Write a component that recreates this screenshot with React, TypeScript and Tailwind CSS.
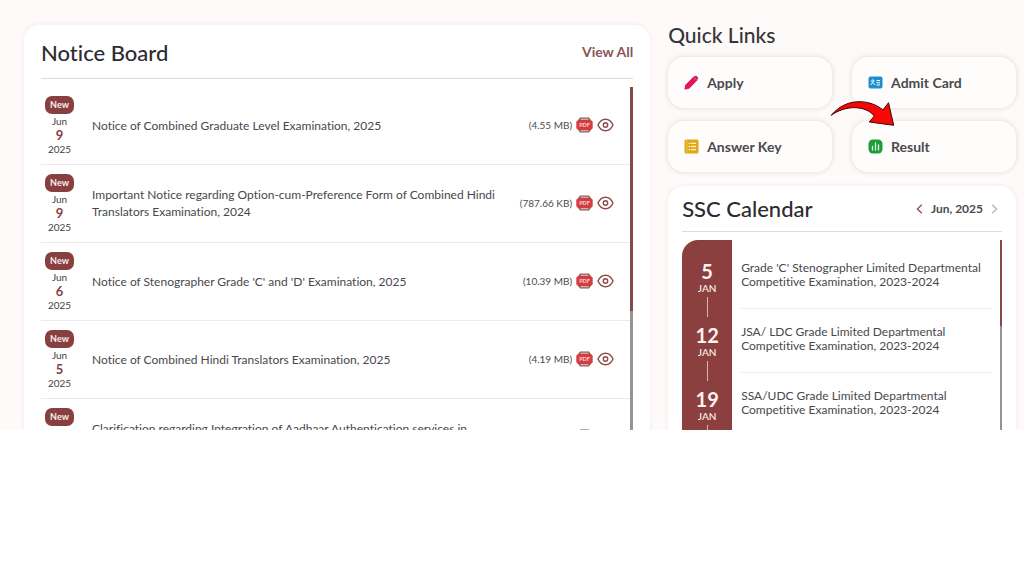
import React from 'react';

interface INotice {
	month: string;
	day: string;
	year: string;
	text: string;
	size: string;
}

interface IExam {
	day: string;
	month: string;
	text: string;
}

const notices: INotice[] = [
	{
		month: 'Jun',
		day: '9',
		year: '2025',
		text: 'Notice of Combined Graduate Level Examination, 2025',
		size: '4.55 MB',
	},
	{
		month: 'Jun',
		day: '9',
		year: '2025',
		text: 'Important Notice regarding Option-cum-Preference Form of Combined Hindi Translators Examination, 2024',
		size: '787.66 KB',
	},
	{
		month: 'Jun',
		day: '6',
		year: '2025',
		text: "Notice of Stenographer Grade 'C' and 'D' Examination, 2025",
		size: '10.39 MB',
	},
	{
		month: 'Jun',
		day: '5',
		year: '2025',
		text: 'Notice of Combined Hindi Translators Examination, 2025',
		size: '4.19 MB',
	},
	{
		month: 'Jun',
		day: '4',
		year: '2025',
		text: 'Clarification regarding Integration of Aadhaar Authentication services in Examinations',
		size: '1.02 MB',
	},
];

const exams: IExam[] = [
	{
		day: '5',
		month: 'JAN',
		text: "Grade 'C' Stenographer Limited Departmental Competitive Examination, 2023-2024",
	},
	{
		day: '12',
		month: 'JAN',
		text: 'JSA/ LDC Grade Limited Departmental Competitive Examination, 2023-2024',
	},
	{
		day: '19',
		month: 'JAN',
		text: 'SSA/UDC Grade Limited Departmental Competitive Examination, 2023-2024',
	},
];

const PdfIcon: React.FC = () => (
	<svg viewBox="0 0 17 16" className="w-[17px] h-4">
		<path d="M4 .6h9l2 2.600v9.600l-2 2.600H4l-2-2.600V3.200z" fill="#94504f" />
		<path d="M4.500 2.200h8M4.500 13.800h8" stroke="#f1d3d2" strokeWidth="1" />
		<rect x="0.300" y="3.200" width="16.400" height="9.600" rx="2.200" fill="#d63d42" />
		<text
			x="8.500"
			y="10"
			textAnchor="middle"
			fontSize="5.500"
			fontWeight="700"
			fill="#f9d5d5"
		>
			PDF
		</text>
	</svg>
);

const EyeIcon: React.FC = () => (
	<svg
		viewBox="0 0 17 14"
		className="w-[17px] h-[14px]"
		fill="none"
		stroke="#8b4a4a"
		strokeWidth="1.400"
	>
		<path d="M1 7C2.700 3.300 5.400 1.200 8.500 1.200S14.300 3.300 16 7c-1.700 3.700-4.400 5.800-7.500 5.800S2.700 10.700 1 7z" />
		<circle cx="8.500" cy="7" r="2.200" />
	</svg>
);

const ApplyIcon: React.FC = () => (
	<svg viewBox="0 0 15 15" className="w-[15px] h-[15px]">
		<path
			d="M1.200 13.800l.8-3.600L9.900 2.300l2.800 2.800-7.900 7.900z"
			fill="#e3125f"
			stroke="#e3125f"
			strokeWidth="1.400"
			strokeLinejoin="round"
		/>
		<path
			d="M10 2l.9-.9c.5-.5 1.200-.5 1.700 0l1.300 1.300c.5.5.5 1.200 0 1.700l-.9.9z"
			fill="#b8285b"
		/>
		<path d="M10.600 3.300l1.200 1.200" stroke="#f7b5cd" strokeWidth="0.900" />
	</svg>
);

const AdmitIcon: React.FC = () => (
	<svg viewBox="0 0 15 15" className="w-[15px] h-[15px]">
		<rect x="0.500" y="1.500" width="14" height="12" rx="2" fill="#1b8fd0" />
		<g fill="none" stroke="#fff" strokeWidth="1">
			<circle cx="4.800" cy="6" r="1.100" />
			<path d="M2.800 10c.2-1.300 1-1.900 2-1.900s1.800.6 2 1.900M8.500 5.500H12M8.500 7.700H12M8.500 9.900H12" />
		</g>
	</svg>
);

const AnswerIcon: React.FC = () => (
	<svg viewBox="0 0 15 15" className="w-[15px] h-[15px]">
		<rect x="0.500" y="0.500" width="14" height="14" rx="1.500" fill="#dfa716" />
		<path d="M2.800 1v13" stroke="#f0cb63" strokeWidth="0.800" />
		<path
			d="M4.600 4.300H6M4.600 7.500H6M4.600 10.700H6M6.800 4.300h5.200M6.800 7.500h5.200M6.800 10.700h5.200"
			stroke="#fff3cf"
			strokeWidth="1.300"
		/>
	</svg>
);

const ResultIcon: React.FC = () => (
	<svg viewBox="0 0 15 15" className="w-[15px] h-[15px]">
		<rect x="0.500" y="0.500" width="14" height="14" rx="4.500" fill="#1d9c3a" />
		<path
			d="M4.500 7.500v3.500M7.500 4v7M10.500 6v5"
			stroke="#e2f7e6"
			strokeWidth="1.300"
			strokeLinecap="round"
		/>
	</svg>
);

const links = [
	{ label: 'Apply', icon: <ApplyIcon /> },
	{ label: 'Admit Card', icon: <AdmitIcon /> },
	{ label: 'Answer Key', icon: <AnswerIcon /> },
	{ label: 'Result', icon: <ResultIcon /> },
];

const RedArrow: React.FC = () => (
	<svg
		viewBox="0 0 66 28"
		className="absolute left-[calc(50%-12px)] top-[43px] w-[66px] h-7 pointer-events-none"
	>
		<path
			d="M1.200 15.300C9 6 19 1.500 30 1.700c9 .2 17 3.200 23 8.300l5.500-7.300 5.200 22.600L39.300 22l5-6C36 5.500 16 4.500 1.200 15.300z"
			fill="#f90606"
			stroke="#3a0a0a"
			strokeWidth="1"
			strokeLinejoin="round"
		/>
	</svg>
);

const Notice: React.FC<INotice> = ({ month, day, year, text, size }) => (
	<li className="flex items-center h-[78px] pr-4 border-b border-[#e9eaee]">
		<div className="flex flex-col items-center w-[37px] mr-[14px] text-[10px] leading-[14px] text-[#3f3f42]">
			<span className="h-[18px] px-[5px] rounded-[7px] bg-[#87403f] text-[#fbeeee] text-[9px] leading-[17px] font-bold">
				New
			</span>
			<span>{month}</span>
			<span className="text-[13px] leading-[14px] font-bold text-[#87403f]">{day}</span>
			<span>{year}</span>
		</div>
		<p className="flex-1 pr-2 pb-px text-xs leading-[17px] text-[#48484b]">{text}</p>
		<div className="flex items-center gap-1 pb-px text-[10px] text-[#4b4b4e]">
			<span className="whitespace-nowrap">({size})</span>
			<a href="#" aria-label="PDF">
				<PdfIcon />
			</a>
			<a href="#" aria-label="View">
				<EyeIcon />
			</a>
		</div>
	</li>
);

const NoticeBoard: React.FC = () => (
	<section className="px-[17px] rounded-t-2xl bg-white border-t border-[#f8f3f2] shadow-[0_0_4px_rgba(120,70,70,0.08)]">
		<header className="flex items-center justify-between h-[54px] pt-[2px] border-b border-[#dcdcde]">
			<h2 className="text-[22px] leading-7 font-medium text-[#2c2c30]">Notice Board</h2>
			<a href="#" className="text-[14px] leading-5 pb-[2px] font-bold text-[#8a5557]">
				View All
			</a>
		</header>
		<div className="flex mt-2">
			<ul className="flex-1">
				{notices.map((notice) => (
					<Notice key={notice.text} {...notice} />
				))}
			</ul>
			<div className="w-[3px] bg-[#949494]">
				<div className="h-56 bg-[#87484a]"></div>
			</div>
		</div>
	</section>
);

const QuickLinks: React.FC = () => (
	<section>
		<h2 className="text-[21px] leading-[22px] font-medium text-[#35353a]">Quick Links</h2>
		<div className="relative grid grid-cols-2 gap-x-5 gap-y-[13px] mt-[11px]">
			{links.map(({ label, icon }) => (
				<a
					key={label}
					href="#"
					className="flex items-center gap-2 h-[51px] px-4 pb-px rounded-2xl bg-[#fffdfc]
					text-[14px] font-bold text-[#4a4a4f] shadow-[0_0_5px_rgba(90,60,60,0.18)]"
				>
					{icon}
					{label}
				</a>
			))}
			<RedArrow />
		</div>
	</section>
);

const Calendar: React.FC = () => (
	<section className="mt-[14px] px-[14px] rounded-t-2xl bg-white shadow-[0_0_4px_rgba(120,70,70,0.1)]">
		<header className="flex items-center justify-between h-[46px] border-b border-[#dcdcde]">
			<h2 className="text-[22px] leading-7 font-medium text-[#2c2c30]">SSC Calendar</h2>
			<div className="flex items-center gap-2 pr-1 text-xs font-bold text-[#4a4a4f]">
				<button type="button" aria-label="Previous month">
					<svg viewBox="0 0 7 10" className="w-[7px] h-[10px]" fill="none" stroke="#875052" strokeWidth="1.300">
						<path d="M5.800.8L1.400 5l4.400 4.200" />
					</svg>
				</button>
				<span>Jun, 2025</span>
				<button type="button" aria-label="Next month">
					<svg viewBox="0 0 7 10" className="w-[7px] h-[10px]" fill="none" stroke="#b9b5b6" strokeWidth="1.300">
						<path d="M1.200.8L5.600 5 1.200 9.200" />
					</svg>
				</button>
			</div>
		</header>
		<div className="flex mt-2">
			<div className="w-[50px] pt-5 rounded-tl-2xl bg-[#8b403f] text-[#fdf3f2]">
				{exams.map(({ day, month }) => (
					<div key={day} className="flex flex-col items-center h-16">
						<span className="text-[20px] leading-[22px] font-bold">{day}</span>
						<span className="mt-px text-[10px] leading-[10px] font-medium">{month}</span>
						<span className="w-px h-5 mt-1 bg-[#d9b3b0]"></span>
					</div>
				))}
			</div>
			<ul className="flex-1 pt-[5px] pl-[9px] pr-[9px]">
				{exams.map(({ day, text }) => (
					<li
						key={day}
						className="flex items-center h-16 pb-1 border-b border-[#ececee] text-xs leading-[14px] text-[#48484b]"
					>
						{text}
					</li>
				))}
			</ul>
			<div className="w-[2px] bg-[#949494]">
				<div className="h-[86px] bg-[#87484a]"></div>
			</div>
		</div>
	</section>
);

const App: React.FC = () => {
	return (
		<div className="min-h-screen bg-white font-['Lato',sans-serif] [font-variant-ligatures:none]">
			<main
				className="grid grid-cols-[9fr_5fr] gap-x-[18px] h-[430px] pt-6 pl-6 pr-2
				bg-[#fefaf9] overflow-hidden"
			>
				<NoticeBoard />
				<div>
					<QuickLinks />
					<Calendar />
				</div>
			</main>
		</div>
	);
};

export default App;
